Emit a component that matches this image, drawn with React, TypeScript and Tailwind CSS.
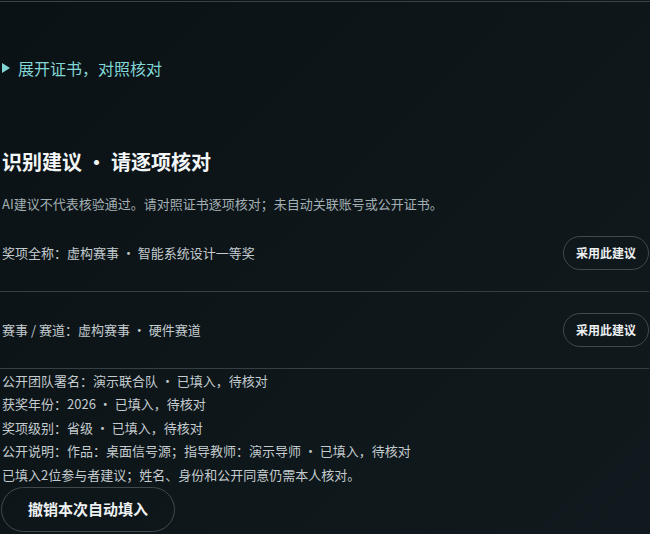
const FONT = "font-['Noto_Sans_CJK_SC','Noto_Sans',sans-serif]";

const SUGGESTIONS = [
  { label: "奖项全称", value: "虚构赛事 · 智能系统设计一等奖" },
  { label: "赛事 / 赛道", value: "虚构赛事 · 硬件赛道" },
];

const FILLED = [
  "公开团队署名：演示联合队 · 已填入，待核对",
  "获奖年份：2026 · 已填入，待核对",
  "奖项级别：省级 · 已填入，待核对",
  "公开说明：作品：桌面信号源；指导教师：演示导师 · 已填入，待核对",
  "已填入2位参与者建议；姓名、身份和公开同意仍需本人核对。",
];

export default function App() {
  return (
    <div
      className={`${FONT} min-h-[534px] w-full overflow-hidden bg-[linear-gradient(135deg,#0b1215,#101a1e)] pt-px text-[#c3cbce]`}
    >
      <section className="border-t border-[#3a4347] pl-[2px] pr-px">
        {/* details summary */}
        <div className="mt-[54px] flex items-center gap-[8px] text-[16px] leading-6 text-[#82d6d6]">
          <svg width="8" height="10" viewBox="0 0 8 10" className="shrink-0">
            <path d="M0 0 L8 5 L0 10 Z" fill="#82d6d6" />
          </svg>
          <span>展开证书，对照核对</span>
        </div>

        <h2 className="mt-[68px] text-[20px] font-bold leading-7 text-[#f3f6f7]">
          识别建议 · 请逐项核对
        </h2>
        <p className="mt-[18px] text-[13px] leading-5 text-[#a3afb3]">
          AI建议不代表核验通过。请对照证书逐项核对；未自动关联账号或公开证书。
        </p>

        <div className="-ml-[2px] mt-px">
          {SUGGESTIONS.map((s) => (
            <div
              key={s.label}
              className="flex items-center justify-between border-b border-[#364044] py-[21px] pl-[2px]"
            >
              <span className="text-[13px] leading-5">
                {s.label}：{s.value}
              </span>
              <button className="h-[34px] rounded-full border border-[#41494d] px-[12px] text-[12px] font-bold text-[#eef1f2]">
                采用此建议
              </button>
            </div>
          ))}
        </div>

        <div className="text-[13px] leading-[23.4px]">
          {FILLED.map((line) => (
            <p key={line}>{line}</p>
          ))}
        </div>

        <button className="-ml-px mt-px h-[45px] rounded-full border border-[#41494d] px-[26px] text-[15px] font-bold text-[#eef1f2]">
          撤销本次自动填入
        </button>
      </section>
    </div>
  );
}
